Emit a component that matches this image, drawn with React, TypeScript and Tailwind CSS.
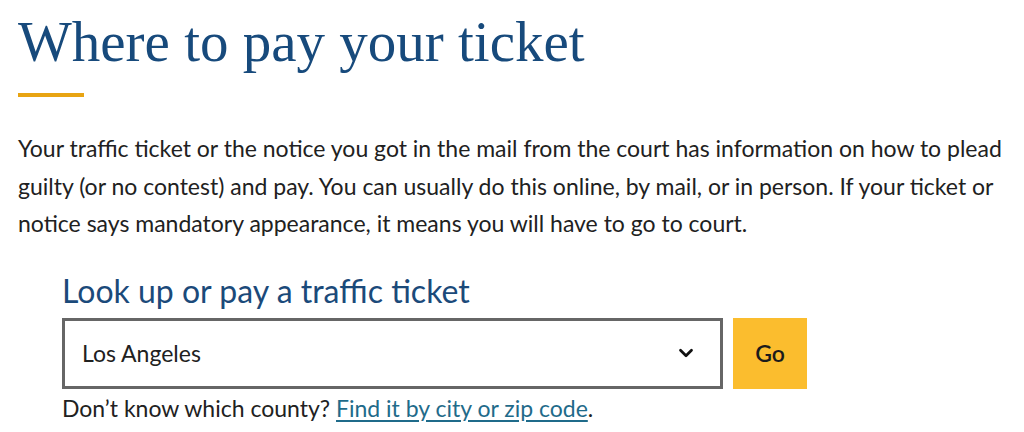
import React, { useState } from 'react';
import { ChevronDown } from 'lucide-react';

const counties = ['Alameda', 'Los Angeles', 'Orange', 'Riverside', 'Sacramento', 'San Diego'];

const App: React.FC = () => {
  const [county, setCounty] = useState('Los Angeles');

  return (
    <div className="min-h-screen bg-white px-[18px] pt-[9px] font-['Lato',sans-serif] text-[#212121]">
      <h1 className="font-['Liberation_Serif',serif] text-[57px] leading-[66px] text-[#174a7c]">
        Where to pay your ticket
      </h1>
      <div className="mt-[18px] h-[4px] w-[66px] bg-[#e8a412]" />
      <p className="mt-[33px] text-[23px] leading-[37.5px]">
        Your traffic ticket or the notice you got in the mail from the court has information on how to plead
        guilty (or no contest) and pay. You can usually do this online, by mail, or in person. If your ticket or
        notice says mandatory appearance, it means you will have to go to court.
      </p>

      <div className="ml-[44px] mt-[28px]">
        <h2 className="text-[32px] leading-[40px] text-[#1b4a7a]">Look up or pay a traffic ticket</h2>
        <form
          className="mt-[7px] flex gap-[10px]"
          onSubmit={(e) => {
            e.preventDefault();
          }}
        >
          <div className="relative w-[661px]">
            <select
              value={county}
              onChange={(e) => setCounty(e.target.value)}
              className="box-border h-[71px] w-full appearance-none border-[3px] border-[#666] bg-white pl-[17px] pr-12 text-[23px] text-[#212121] outline-none"
            >
              {counties.map((c) => (
                <option key={c} value={c}>
                  {c}
                </option>
              ))}
            </select>
            <ChevronDown
              className="pointer-events-none absolute right-[26px] top-1/2 -translate-y-1/2 text-[#111]"
              size={22}
              strokeWidth={3}
            />
          </div>
          <button type="submit" className="h-[71px] w-[74px] bg-[#fbbd2e] text-[23px] font-semibold text-[#1b1b1b]">
            Go
          </button>
        </form>
        <p className="mt-[5px] text-[23px] leading-[28px]">
          Don’t know which county?{' '}
          <a href="#" className="text-[#1f6b8a] underline underline-offset-[3px]">
            Find it by city or zip code
          </a>
          .
        </p>
      </div>
    </div>
  );
};

export default App;
